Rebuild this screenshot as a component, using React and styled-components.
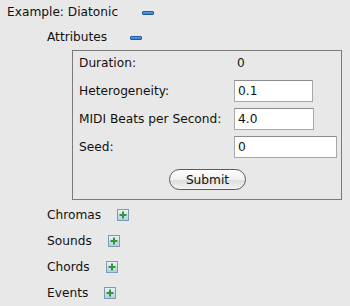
import React from "react";
import styled, { createGlobalStyle } from "styled-components";

const GlobalStyle = createGlobalStyle`
  html, body { margin: 0; padding: 0; background: #e8e8e8; }
  body {
    font-family: "Lucida Grande", "DejaVu Sans", sans-serif;
    font-size: 12.2px;
    color: #111;
  }
`;

const Page = styled.div`
  width: 350px;
  height: 306px;
  padding-left: 7px;
  box-sizing: border-box;
  display: flex;
  flex-direction: column;
  overflow: hidden;
`;

const NodeRow = styled.div`
  display: flex;
  align-items: center;
  height: ${(p) => p.$h || 26}px;
  margin-top: ${(p) => p.$mt || 0}px;
`;

const Label = styled.span`
  white-space: nowrap;
  line-height: 1;
`;

const Children = styled.div`
  display: flex;
  flex-direction: column;
  margin-left: ${(p) => p.$indent}px;
`;

const MinusIcon = styled.span`
  display: inline-block;
  width: 10px;
  height: 2px;
  margin-left: ${(p) => p.$gap}px;
  border: 1px solid #1d5ba6;
  background: linear-gradient(#6fa6e6, #2f74c8);
  border-radius: 1px;
`;

const PlusBox = styled.span`
  display: inline-flex;
  width: 12px;
  height: 12px;
  margin-left: ${(p) => p.$gap}px;
  box-sizing: border-box;
  border: 1px solid #7e9ab2;
  background: linear-gradient(#eaf2f8, #b3cde0);
  align-items: center;
  justify-content: center;
`;

const Plus = () => (
  <PlusBox $gap={16}>
    <svg width="10" height="10" viewBox="0 0 10 10">
      <rect x="4" y="1.5" width="2" height="7" fill="#2c9b33" />
      <rect x="1.5" y="4" width="7" height="2" fill="#2c9b33" />
    </svg>
  </PlusBox>
);

const Panel = styled.div`
  margin-left: 25px;
  width: 270px;
  box-sizing: border-box;
  border: 1px solid #7a7a7a;
  padding: 1px 5px 9px 6px;
  display: flex;
  flex-direction: column;
  align-items: stretch;
`;

const FormGrid = styled.div`
  display: grid;
  grid-template-columns: 155px 1fr;
  grid-auto-rows: 22px;
  row-gap: 6px;
  align-items: center;
`;

const FieldLabel = styled.span`
  white-space: nowrap;
`;

const StaticValue = styled.span`
  padding-left: 3px;
`;

const TextInput = styled.input`
  width: ${(p) => p.$w}px;
  height: 22px;
  box-sizing: border-box;
  border: 1px solid #a8a8a8;
  border-top-color: #8c8c8c;
  background: #fff;
  font-family: inherit;
  font-size: 12.2px;
  color: #111;
  padding: 0 3px;
  margin: 0;
  outline: none;
`;

const Submit = styled.button`
  align-self: center;
  margin-top: 11px;
  width: 77px;
  height: 21px;
  border-radius: 11px;
  border: 1px solid #5a5a5a;
  background: linear-gradient(#ffffff 0%, #f1f1f1 50%, #dcdcdc 51%, #f4f4f4 100%);
  font-family: inherit;
  font-size: 12.2px;
  color: #111;
  padding: 0;
`;

export default function App() {
  return (
    <>
      <GlobalStyle />
      <Page>
        <NodeRow $h={26}>
          <Label>Example: Diatonic</Label>
          <MinusIcon $gap={24} />
        </NodeRow>
        <Children $indent={40}>
          <NodeRow $h={25}>
            <Label>Attributes</Label>
            <MinusIcon $gap={23} />
          </NodeRow>
          <Panel>
            <FormGrid>
              <FieldLabel>Duration:</FieldLabel>
              <StaticValue>0</StaticValue>
              <FieldLabel>Heterogeneity:</FieldLabel>
              <TextInput $w={79} defaultValue="0.1" />
              <FieldLabel>MIDI Beats per Second:</FieldLabel>
              <TextInput $w={80} defaultValue="4.0" />
              <FieldLabel>Seed:</FieldLabel>
              <TextInput $w={103} defaultValue="0" />
            </FormGrid>
            <Submit>Submit</Submit>
          </Panel>
          <NodeRow $h={26} $mt={2}>
            <Label>Chromas</Label>
            <Plus />
          </NodeRow>
          <NodeRow $h={26}>
            <Label>Sounds</Label>
            <Plus />
          </NodeRow>
          <NodeRow $h={26}>
            <Label>Chords</Label>
            <Plus />
          </NodeRow>
          <NodeRow $h={26}>
            <Label>Events</Label>
            <Plus />
          </NodeRow>
        </Children>
      </Page>
    </>
  );
}
